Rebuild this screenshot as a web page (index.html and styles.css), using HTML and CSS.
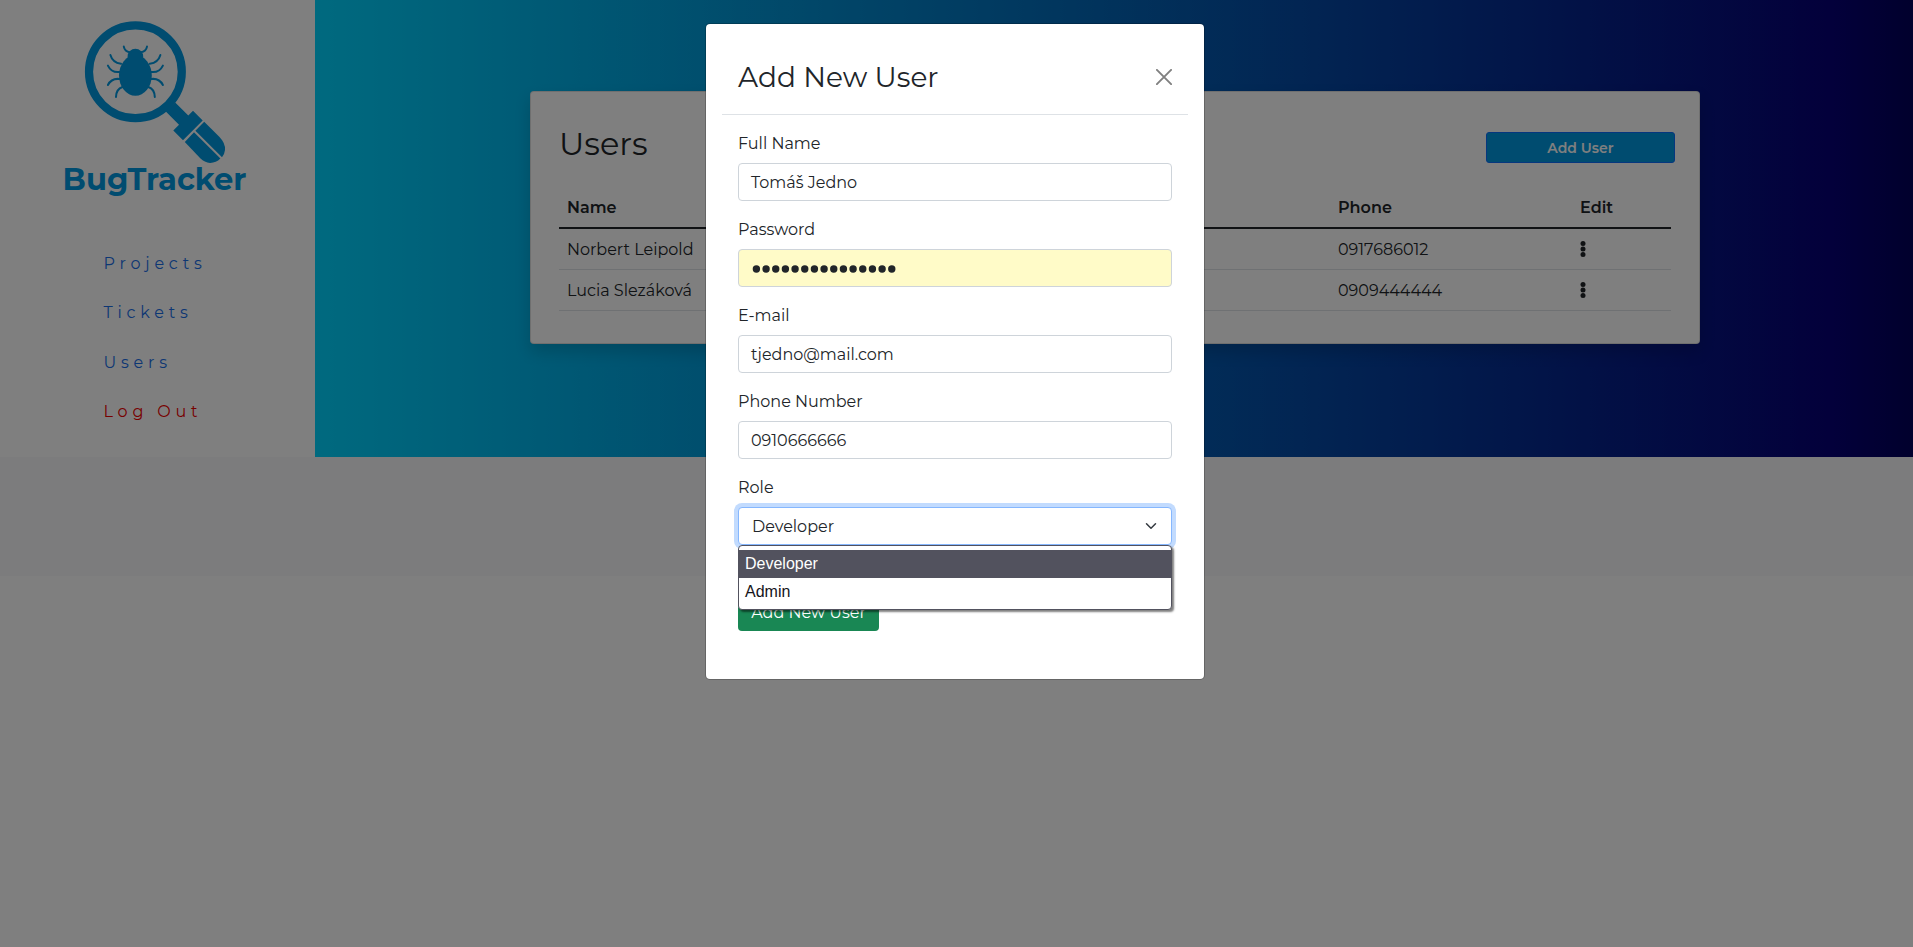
FILE: index.html
```html
<!DOCTYPE html>
<html lang="en">
<head>
<meta charset="utf-8">
<title>BugTracker</title>
<link rel="stylesheet" href="styles.css">
</head>
<body>
<div class="page">
  <div class="layout">
    <nav class="sidebar">
      <svg class="logo" width="240" height="200" viewBox="40 0 240 200">
        <circle cx="135.4" cy="71.8" r="46.4" fill="none" stroke="#0098e0" stroke-width="8.2"/>
        <g fill="#0098e0">
          <ellipse cx="135.4" cy="75.5" rx="16.4" ry="20.3"/>
          <path d="M127.6 60v-3.5a7.8 7.8 0 0 1 15.6 0V60z"/>
          <path d="M175.2 102.4L188.3 115.6L193 110.8L202.7 120.6L183 140.2L173.3 130.5L179 124.7L165.8 111.5Z"/>
          <path d="M204.2 121.8L219.5 137.1Q225.6 143.5 225 150Q224.5 154.5 222 157.3L195.4 130.8Z"/>
          <path d="M194 132.3L220.4 158.6Q216 163 210 162.9Q204.5 162.3 200.5 158.5L184.8 142.1Z"/>
        </g>
        <g fill="none" stroke="#0098e0" stroke-width="2" stroke-linecap="round">
          <path d="M129.8 52.3Q124.8 51.5 123.8 46.6"/>
          <path d="M141 52.3Q146 51.5 147 46.6"/>
          <path d="M121 63.8Q112.5 62.5 110.4 55"/>
          <path d="M149.8 63.8Q158.3 62.5 160.4 55"/>
          <path d="M119.5 72Q111.5 73 107.9 65.6"/>
          <path d="M151.3 72Q159.3 73 162.9 65.6"/>
          <path d="M119.5 79Q111.5 78 107.9 85"/>
          <path d="M151.3 79Q159.3 78 162.9 85"/>
          <path d="M122.5 87Q116.2 89 116 97"/>
          <path d="M148.3 87Q154.6 89 154.8 97"/>
        </g>
        <text class="logo-text" x="62.6" y="189.7">BugTracker</text>
      </svg>
      <div class="links">
        <a>Projects</a>
        <a>Tickets</a>
        <a>Users</a>
        <a class="logout">Log Out</a>
      </div>
    </nav>
    <main class="content">
      <section class="card">
        <div class="card-head">
          <h2>Users</h2>
          <button class="add-user">Add User</button>
        </div>
        <table>
          <thead><tr><th class="c-name">Name</th><th class="c-phone">Phone</th><th class="c-edit">Edit</th></tr></thead>
          <tbody>
            <tr><td>Norbert Leipold</td><td>0917686012</td><td><svg class="dots" width="6" height="18" viewBox="0 0 6 18"><circle cx="3" cy="3.4" r="2.5"/><circle cx="3" cy="9" r="2.5"/><circle cx="3" cy="14.6" r="2.5"/></svg></td></tr>
            <tr><td>Lucia Slezáková</td><td>0909444444</td><td><svg class="dots" width="6" height="18" viewBox="0 0 6 18"><circle cx="3" cy="3.4" r="2.5"/><circle cx="3" cy="9" r="2.5"/><circle cx="3" cy="14.6" r="2.5"/></svg></td></tr>
          </tbody>
        </table>
      </section>
    </main>
  </div>
  <footer class="footer"></footer>
</div>
<div class="backdrop">
  <div class="modal">
    <header class="modal-head">
      <h4>Add New User</h4>
      <svg class="close" width="16" height="16" viewBox="0 0 16 16"><path d="M.9.9l14.2 14.2M15.1.9L.9 15.1"/></svg>
    </header>
    <form class="form">
      <label>Full Name</label>
      <div class="field">Tomáš Jedno</div>
      <label>Password</label>
      <div class="field password">
        <svg width="150" height="10" viewBox="0 0 150 10"><path d="M4.400 5h140" stroke="#212529" stroke-width="7.4" stroke-linecap="round" stroke-dasharray="0 9.67"/></svg>
      </div>
      <label>E-mail</label>
      <div class="field">tjedno@mail.com</div>
      <label>Phone Number</label>
      <div class="field">0910666666</div>
      <label>Role</label>
      <div class="field select"><span>Developer</span>
        <svg width="16" height="16" viewBox="0 0 16 16"><path d="M2 5l6 6 6-6"/></svg>
        <div class="menu">
          <div class="option active">Developer</div>
          <div class="option">Admin</div>
        </div>
      </div>
      <button class="submit" type="button">Add New User</button>
    </form>
  </div>
</div>
</body>
</html>
```
FILE: styles.css
```css
* { box-sizing: border-box; }
body {
  margin: 0;
  height: 947px;
  overflow: hidden;
  background: #fff;
  color: #212529;
  font: 400 16px/24px Montserrat, Inter, sans-serif;
}
h2, h4 { margin: 0; font-weight: 400; }
button { font-family: inherit; }
.layout { display: flex; height: 457px; }
.sidebar { width: 315px; background: #fff; }
.logo { display: block; margin-left: 40px; }
.logo-text { font: 700 30.5px Montserrat, Inter, sans-serif; fill: #0098e0; }
.links { display: flex; flex-direction: column; gap: 25.4px; padding: 52px 0 0 103.5px; }
.links a { color: #1a6fe8; letter-spacing: 4.8px; }
.links .logout { color: #f00000; }
.content {
  flex: 1;
  padding: 91px 213px 0 215px;
  background: linear-gradient(90deg, #00d4ff 0%, #060076 95%, #02005a 100%);
}
.card {
  height: 253px;
  padding: 33px 24px 0 28px;
  background: #fff;
  border: 1px solid rgba(0, 0, 0, .125);
  border-radius: 4px;
  box-shadow: 0 8px 16px rgba(0, 0, 0, .15);
}
.card-head { display: flex; justify-content: space-between; align-items: flex-start; height: 62px; }
.card-head h2 { font-size: 32px; line-height: 38.4px; }
.add-user {
  width: 189px;
  height: 31px;
  margin-top: 7px;
  border: 1px solid #0d6efd;
  border-radius: 3px;
  background: #0098e0;
  color: #fff;
  font-size: 14px;
  font-weight: 600;
}
table { width: 1112px; border-collapse: collapse; table-layout: fixed; }
th, td { padding: 9px 8px 7px; height: 41px; text-align: left; border-bottom: 1px solid #dee2e6; }
th { font-weight: 600; border-bottom: 2px solid #212529; }
td { vertical-align: top; }
.c-name { width: 771px; }
.c-phone { width: 242px; }
.dots { display: block; margin: 2px 0 0 0; fill: #212529; }
.footer { height: 119px; background: #f8f9fa; }
.backdrop { position: absolute; inset: 0; padding-top: 23px; background: rgba(0, 0, 0, .5); }
.modal {
  width: 500px;
  height: 657px;
  margin-left: 705px;
  padding: 16px;
  background: #fff;
  background-clip: padding-box;
  border: 1px solid rgba(0, 0, 0, .2);
  border-radius: 5px;
}
.modal-head {
  display: flex;
  justify-content: space-between;
  align-items: center;
  height: 75px;
  padding: 0 16px;
  border-bottom: 1px solid #dee2e6;
}
.modal-head h4 { font-size: 28px; line-height: 42px; }
.close { fill: none; stroke: #808080; stroke-width: 1.9; stroke-linecap: round; }
.form { display: flex; flex-direction: column; padding: 16px; }
label { padding-top: 1px; margin-bottom: 7px; }
.field {
  height: 38px;
  margin-bottom: 16px;
  padding: 7px 12px 5px;
  border: 1px solid #ced4da;
  border-radius: 4px;
  background: #fff;
}
.password { display: flex; align-items: center; padding-left: 13px; background: #fffbc8; }
.select {
  position: relative;
  display: flex;
  justify-content: space-between;
  align-items: center;
  padding: 6px 12px 6px 13px;
  border-color: #86b7fe;
  box-shadow: 0 0 0 4px #c2dbfe;
  margin-bottom: 48px;
}
.select span { padding-top: 2px; }
.select svg { fill: none; stroke: #343a40; stroke-width: 2; stroke-linecap: round; stroke-linejoin: round; width: 12px; margin-right: 2px; }
.menu {
  position: absolute;
  top: 37px;
  left: -1px;
  width: 434px;
  height: 65px;
  padding-top: 4px;
  border: 1px solid #52525e;
  border-radius: 4px;
  background: #fff;
  box-shadow: 2px 2px 2px rgba(0, 0, 0, .5);
  font: 16px/28px "Liberation Sans", Arial, sans-serif;
  color: #15141a;
}
.option { height: 28px; padding-left: 6px; line-height: 27px; }
.option.active { background: #52525e; color: #fff; }
.submit {
  align-self: flex-start;
  width: 141px;
  height: 38px;
  padding: 0;
  border: 0;
  border-radius: 4px;
  background: #198754;
  color: #fff;
  font-size: 16px;
}
```
